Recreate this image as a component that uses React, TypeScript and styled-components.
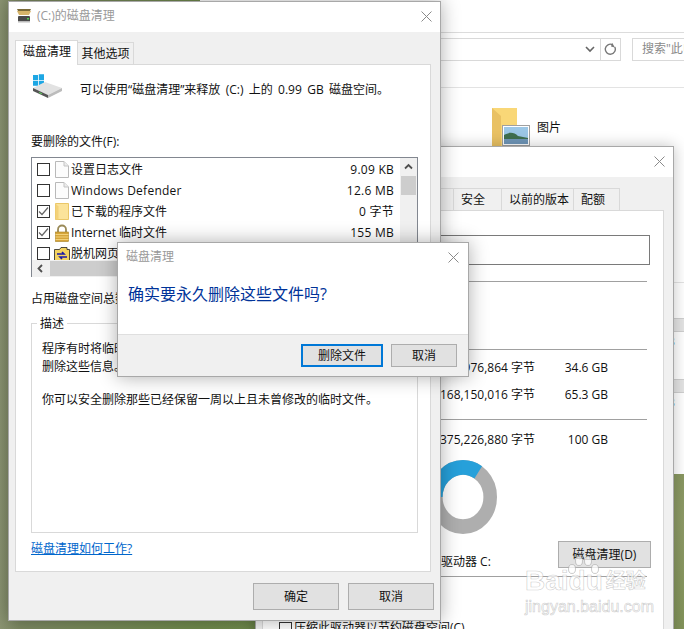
import React from "react";
import styled, { createGlobalStyle, css } from "styled-components";

const Global = createGlobalStyle`
  html, body { margin: 0; padding: 0; background: #7d8f5c; }
  * { box-sizing: border-box; }
`;

const Desktop = styled.div`
  position: relative;
  width: 684px;
  height: 629px;
  overflow: hidden;
  font-family: "Open Sans", "Noto Sans CJK SC", sans-serif;
  font-size: 12px;
  line-height: 18px;
  color: #111;
  background:
    radial-gradient(120px 200px at 100% 520px, #8d9a66, transparent),
    linear-gradient(90deg, #8b9472 0, #7d8a62 20px, #6f8a4c 200px, #7a8f50 100%);
`;

const Explorer = styled.div`
  position: absolute;
  left: 200px;
  top: 0;
  width: 484px;
  height: 474px;
  background: #fff;
  display: flex;
  flex-direction: column;
`;
const ExplorerTop = styled.div`
  height: 33px;
  flex: none;
  border-bottom: 1px solid #dcdcdc;
`;
const ExplorerBar = styled.div`
  height: 55px;
  flex: none;
  display: flex;
  gap: 11px;
  padding: 5px 0 0 0;
  border-bottom: 1px solid #e3e3e3;
`;
const AddressBox = styled.div`
  width: 421px;
  height: 23px;
  display: flex;
  justify-content: flex-end;
  border: 1px solid #d9d9d9;
`;
const AddressBtn = styled.div<{ $w: number }>`
  width: ${(p) => p.$w}px;
  display: flex;
  align-items: center;
  justify-content: center;
  color: #666;
  & + & { border-left: 1px solid #d9d9d9; }
`;
const SearchBox = styled.div`
  flex: 1;
  height: 23px;
  border: 1px solid #d9d9d9;
  border-right: 0;
  padding-left: 9px;
  line-height: 20px;
  color: #8a8a8a;
  white-space: nowrap;
  overflow: hidden;
`;
const ExplorerBody = styled.div`
  flex: 1;
  display: flex;
  flex-direction: column;
`;
const FolderItem = styled.div`
  margin: 20px 0 0 292px;
  height: 40px;
  display: flex;
  gap: 7px;
`;
const FolderLabel = styled.span`
  margin-top: 11px;
  color: #111;
`;
const SideStrip = styled.div`
  margin: 134px 0 0 474px;
  width: 10px;
  display: flex;
  flex-direction: column;
  border-top: 1px solid #e3e3e3;
  padding-top: 35px;
`;
const SideHead = styled.div`
  height: 14px;
  background: #e4e4e4;
  border-top: 1px solid #cfcfcf;
  border-bottom: 1px solid #cfcfcf;
`;
const SideValue = styled.div`
  height: 47px;
  padding-top: 1px;
  color: #345;
  margin-left: -6px;
  overflow: hidden;
`;

const Win = styled.div<{ $x: number; $y: number; $w: number; $h: number; $strong?: boolean }>`
  position: absolute;
  isolation: isolate;
  left: ${(p) => p.$x}px;
  top: ${(p) => p.$y}px;
  width: ${(p) => p.$w}px;
  height: ${(p) => p.$h}px;
  background: #f0f0f0;
  border: 1px solid #a8a8a8;
  display: flex;
  flex-direction: column;
  box-shadow: 0 0 ${(p) => (p.$strong ? 18 : 14)}px rgba(0, 0, 0, ${(p) => (p.$strong ? 0.32 : 0.24)});
`;
const TitleBar = styled.div<{ $pad: number; $right?: number }>`
  height: 30px;
  flex: none;
  background: #fff;
  display: flex;
  align-items: center;
  gap: 5px;
  padding: 0 ${(p) => p.$right ?? 8}px 2px ${(p) => p.$pad}px;
  color: #999;
`;
const TitleText = styled.span`
  flex: 1;
`;
const TabRow = styled.div<{ $top: number }>`
  display: flex;
  align-items: flex-end;
  height: 25px;
  flex: none;
  margin: ${(p) => p.$top}px 0 -1px 6px;
  position: relative;
  z-index: 1;
`;
const Tab = styled.div<{ $w: number; $active?: boolean; $nudge?: number }>`
  width: ${(p) => p.$w}px;
  text-align: center;
  padding-left: ${(p) => p.$nudge ?? 0}px;
  border: 1px solid #d9d9d9;
  border-left-width: ${(p) => (p.$active ? 1 : 0)}px;
  ${(p) =>
    p.$active
      ? css`
          height: 25px;
          background: #fff;
          border-bottom: 0;
          line-height: 22px;
        `
      : css`
          height: 23px;
          background: #f0f0f0;
          line-height: 22px;
        `}
`;
const PropTab = styled(Tab)`
  text-align: left;
  padding-left: 7px;
`;
const Panel = styled.div<{ $h: number }>`
  height: ${(p) => p.$h}px;
  flex: none;
  margin: 0 9px 0 6px;
  background: #fff;
  border: 1px solid #d9d9d9;
  display: flex;
  flex-direction: column;
  overflow: hidden;
`;
const CleanPanel = styled(Panel)`
  padding: 9px 12px 0 15px;
`;
const HeaderRow = styled.div`
  height: 24px;
  flex: none;
  display: flex;
  align-items: center;
  gap: 17px;
  padding-left: 2px;
  white-space: nowrap;
`;
const HeaderText = styled.span`
  margin-top: 8px;
  word-spacing: 2.2px;
`;
const TextLine = styled.div<{ $top: number }>`
  margin-top: ${(p) => p.$top}px;
  flex: none;
  white-space: nowrap;
`;
const ListBox = styled.div`
  width: 387px;
  height: 120px;
  flex: none;
  margin-top: 6px;
  border: 1px solid #828790;
  display: flex;
  flex-direction: column;
`;
const ListMain = styled.div`
  height: 102px;
  flex: none;
  display: flex;
`;
const Rows = styled.div`
  flex: 1;
  padding-top: 1px;
  overflow: hidden;
`;
const Row = styled.div`
  height: 21px;
  display: flex;
  align-items: center;
  padding: 0 6px 0 5px;
`;
const CheckBox = styled.span`
  width: 13px;
  height: 13px;
  flex: none;
  border: 1px solid #333;
  background: #fff;
  display: flex;
  align-items: center;
  justify-content: center;
`;
const RowIcon = styled.span`
  width: 16px;
  height: 18px;
  flex: none;
  margin: 0 1px 0 4px;
  display: flex;
  align-items: center;
  justify-content: center;
`;
const RowName = styled.span<{ $latin?: boolean }>`
  flex: 1;
  white-space: nowrap;
  color: #111;
  letter-spacing: ${(p) => (p.$latin ? "0.25px" : "0")};
`;
const RowSize = styled.span`
  white-space: nowrap;
  letter-spacing: 0.25px;
`;
const VScroll = styled.div`
  width: 17px;
  flex: none;
  background: #f0f0f0;
  display: flex;
  flex-direction: column;
`;
const ScrollArrow = styled.div`
  width: 17px;
  height: 17px;
  flex: none;
  display: flex;
  align-items: center;
  justify-content: center;
  color: #505050;
`;
const VThumb = styled.div`
  width: 15px;
  height: 19px;
  margin: 1px;
  background: #cdcdcd;
`;
const HScroll = styled.div`
  height: 17px;
  flex: none;
  background: #f0f0f0;
  display: flex;
`;
const HThumb = styled.div`
  width: 150px;
  height: 15px;
  margin: 1px;
  background: #cdcdcd;
`;
const Group = styled.fieldset`
  width: 387px;
  height: 219px;
  flex: none;
  margin: 6px 0 0;
  padding: 7px 10px 0;
  border: 1px solid #d9d9d9;
`;
const GroupTitle = styled.legend`
  margin-left: -5px;
  padding: 1px 3px 0;
  line-height: 18px;
`;
const Para = styled.p`
  margin: 0 0 15px;
  white-space: pre;
`;
const HelpLink = styled.a`
  margin-top: 7px;
  flex: none;
  align-self: flex-start;
  color: #0066cc;
  text-decoration: underline;
`;
const Footer = styled.div<{ $pad: string; $gap: number; $ruled?: boolean }>`
  flex: 1;
  display: flex;
  justify-content: flex-end;
  gap: ${(p) => p.$gap}px;
  padding: ${(p) => p.$pad};
  border-top: ${(p) => (p.$ruled ? "1px solid #dfdfdf" : "0")};
`;
const Btn = styled.div<{ $w: number; $h?: number; $primary?: boolean }>`
  width: ${(p) => p.$w}px;
  height: ${(p) => p.$h ?? 27}px;
  flex: none;
  display: flex;
  align-items: center;
  justify-content: center;
  background: #e1e1e1;
  border: ${(p) => (p.$primary ? "2px solid #0078d7" : "1px solid #adadad")};
  color: #111;
`;
const Message = styled.div`
  height: 61px;
  flex: none;
  background: #fff;
  padding: 9px 0 0 10px;
  font-size: 16px;
  line-height: 24px;
  color: #003399;
  white-space: nowrap;
`;
const Rule = styled.div<{ $top: number }>`
  height: 1px;
  flex: none;
  margin: ${(p) => p.$top}px 16px 0 14px;
  background: #a0a0a0;
`;
const DriveName = styled.div`
  height: 30px;
  flex: none;
  margin: 24px 13px 0 60px;
  border: 1px solid #7a7a7a;
`;
const TypeBlock = styled.div`
  height: 51px;
  flex: none;
`;
const SpaceRow = styled.div<{ $top: number }>`
  display: grid;
  grid-template-columns: 258px 73px;
  height: 18px;
  flex: none;
  margin: ${(p) => p.$top}px 0 0 14px;
  white-space: nowrap;
`;
const RightCell = styled.span`
  text-align: right;
`;
const Donut = styled.svg`
  display: block;
  flex: none;
  margin: 11px 0 0 166px;
`;
const CleanRow = styled.div`
  margin-top: 7px;
  height: 27px;
  flex: none;
  display: flex;
  justify-content: space-between;
  padding: 0 12px 0 178px;
`;
const DriveCaption = styled.span`
  margin-top: 12px;
  white-space: nowrap;
`;
const CompressRow = styled.div`
  margin: 42px 0 0 16px;
  display: flex;
  align-items: center;
  gap: 2px;
  white-space: nowrap;
`;
const Watermark = styled.div`
  position: absolute;
  left: 525px;
  top: 556px;
  width: 124px;
  display: flex;
  flex-direction: column;
  pointer-events: none;
  color: rgba(255, 255, 255, 0.72);
  -webkit-text-stroke: 0.6px rgba(160, 160, 160, 0.55);
  font-family: "Liberation Sans", "Noto Sans CJK SC", sans-serif;
`;
const Paw = styled.svg`
  position: absolute;
  left: 41px;
  top: 0;
`;
const WaterTop = styled.div`
  margin-top: 11px;
  font-size: 28px;
  font-weight: 700;
  line-height: 28px;
  white-space: nowrap;
`;
const WaterCn = styled.span`
  font-size: 20px;
  margin-left: 3px;
  vertical-align: 2px;
`;
const WaterUrl = styled.div`
  font-size: 16px;
  line-height: 18px;
  margin-top: 3px;
  white-space: nowrap;
`;

const CloseX = () => (
  <svg width="11" height="11" viewBox="0 0 11 11">
    <path d="M.5.5l10 10M10.5.5l-10 10" stroke="#8a8a8a" strokeWidth="1" fill="none" />
  </svg>
);
const Check = () => (
  <svg width="11" height="11" viewBox="0 0 11 11">
    <path d="M1 5.5l3 3 6-7" stroke="#666" strokeWidth="1.2" fill="none" />
  </svg>
);
const FileIcon = () => (
  <svg width="14" height="17" viewBox="0 0 14 17">
    <path d="M.5.5h8.5l4.5 4.5v11.5h-13z" fill="#fcfcfc" stroke="#b9b9b9" />
    <path d="M9 .5v4.5h4.5" fill="#ececec" stroke="#c4c4c4" />
  </svg>
);
const FolderIcon = () => (
  <svg width="14" height="17" viewBox="0 0 14 17">
    <path d="M.5.5h13v16h-13z" fill="#fbe39a" stroke="#eac768" />
    <path d="M.5.5l3 3v13h-3z" fill="#f3d27a" />
  </svg>
);
const LockIcon = () => (
  <svg width="16" height="18" viewBox="0 0 16 18">
    <path d="M4 9V5.5a4 4 0 0 1 8 0V9" fill="none" stroke="#9a8a58" strokeWidth="1.8" />
    <rect x="1.5" y="8" width="13" height="9.5" fill="#d6a53a" stroke="#a57f22" strokeWidth=".6" />
    <path d="M1.5 10.5h13M1.5 13h13M1.5 15.5h13" stroke="#f2d27c" strokeWidth="1" />
  </svg>
);
const OfflineIcon = () => (
  <svg width="16" height="16" viewBox="0 0 16 16">
    <path d="M.5 3.5h5l1.5-2h6v2h2.5v12h-15z" fill="#f4d35e" stroke="#222" strokeWidth=".8" />
    <path d="M3 8h7l-2-2M13 11H6l2 2" fill="none" stroke="#1a1aa8" strokeWidth="1.6" />
  </svg>
);
const SmallChevron = ({ dir }: { dir: "up" | "left" }) => (
  <svg width="9" height="9" viewBox="0 0 9 9">
    <path
      d={dir === "up" ? "M1 6.5l3.5-3.5 3.5 3.5" : "M6 1L2.5 4.5 6 8"}
      stroke="#505050"
      strokeWidth="1.8"
      fill="none"
    />
  </svg>
);
const TitleDrive = () => (
  <svg width="16" height="14" viewBox="0 0 16 14">
    <path d="M1 0h14l-1 2H2z" fill="#7a6a38" />
    <path d="M1 2h14l-2 4H3z" fill="#d6b46a" />
    <rect x="2" y="7" width="12" height="6" rx="1" fill="#4a4a4a" />
    <rect x="2" y="12" width="12" height="1.5" fill="#bbb" />
    <rect x="11" y="9" width="2" height="1.5" fill="#4fd14f" />
  </svg>
);
const BigDrive = () => (
  <svg width="30" height="24" viewBox="0 0 30 24">
    <path d="M0 1h5v5H0zM5.8 .2H11V6H5.8zM0 6.8h5v5H0zM5.8 6.8H11V12H5.8z" fill="#1ea7e4" />
    <path d="M0 14l12-6 17 6-14 7z" fill="#e2e2e2" />
    <path d="M0 14l15 7v3L0 17z" fill="#555" />
    <path d="M15 21l14-7v3l-14 7z" fill="#bcbcbc" />
    <path d="M6 18l3 1.3v1l-3-1.3z" fill="#5fd35f" />
  </svg>
);
const BigFolder = () => (
  <svg width="38" height="38" viewBox="0 0 38 38" style={{ flex: "none" }}>
    <path d="M0 0h25v38H0z" fill="#f9d777" />
    <path d="M0 0l9 8v30H0z" fill="#e9c163" />
    <rect x="10.5" y="17.5" width="27" height="20" fill="#fff" stroke="#a0a0a0" />
    <rect x="12" y="19" width="24" height="17" fill="#9cc7e6" />
    <path d="M12 27c5-3 10-3 14 1l10 2v1H12z" fill="#3f6f4f" />
    <rect x="12" y="31" width="24" height="5" fill="#6f96b8" />
  </svg>
);

const files = [
  { name: "设置日志文件", size: "9.09 KB", on: false, icon: <FileIcon /> },
  { name: "Windows Defender", size: "12.6 MB", on: false, icon: <FileIcon />, latin: true },
  { name: "已下载的程序文件", size: "0 字节", on: true, icon: <FolderIcon /> },
  { name: "Internet 临时文件", size: "155 MB", on: true, icon: <LockIcon /> },
  { name: "脱机网页", size: "0 字节", on: false, icon: <OfflineIcon /> },
];
const tabs = [
  { t: "安全", w: 48 },
  { t: "以前的版本", w: 72 },
  { t: "配额", w: 46 },
];

export default function App() {
  return (
    <Desktop>
      <Global />
      <Explorer>
        <ExplorerTop />
        <ExplorerBar>
          <AddressBox>
            <AddressBtn $w={20}>
              <svg width="10" height="7" viewBox="0 0 10 7">
                <path d="M1 1l4 4 4-4" stroke="#666" strokeWidth="1.6" fill="none" />
              </svg>
            </AddressBtn>
            <AddressBtn $w={20}>
              <svg width="13" height="13" viewBox="0 0 13 13">
                <path d="M10.8 4a5 5 0 1 1-2.3-2.3" stroke="#777" strokeWidth="1.4" fill="none" />
                <path d="M7.5 0v4h4z" fill="#777" transform="rotate(15 9 2)" />
              </svg>
            </AddressBtn>
          </AddressBox>
          <SearchBox>搜索"此电脑"</SearchBox>
        </ExplorerBar>
        <ExplorerBody>
          <FolderItem>
            <BigFolder />
            <FolderLabel>图片</FolderLabel>
          </FolderItem>
          <SideStrip>
            <SideHead />
            <SideValue>3</SideValue>
            <SideHead />
            <SideValue>3</SideValue>
          </SideStrip>
        </ExplorerBody>
      </Explorer>

      <Win $x={255} $y={146} $w={419} $h={500}>
        <TitleBar $pad={12}>
          <TitleText />
          <CloseX />
        </TitleBar>
        <TabRow $top={9}>
          <Tab $w={192} />
          {tabs.map((t) => (
            <PropTab key={t.t} $w={t.w}>
              {t.t}
            </PropTab>
          ))}
        </TabRow>
        <Panel $h={440}>
          <DriveName />
          <Rule $top={16} />
          <TypeBlock />
          <Rule $top={16} />
          <SpaceRow $top={9}>
            <RightCell>976,864 字节</RightCell>
            <RightCell>34.6 GB</RightCell>
          </SpaceRow>
          <SpaceRow $top={9}>
            <RightCell>168,150,016 字节</RightCell>
            <RightCell>65.3 GB</RightCell>
          </SpaceRow>
          <Rule $top={15} />
          <SpaceRow $top={11}>
            <RightCell>375,226,880 字节</RightCell>
            <RightCell>100 GB</RightCell>
          </SpaceRow>
          <Donut width="68" height="74" viewBox="0 0 74 74" preserveAspectRatio="none">
            <circle cx="37" cy="37" r="29.6" fill="none" stroke="#aeaeae" strokeWidth="14.8" />
            <circle
              cx="37"
              cy="37"
              r="29.6"
              fill="none"
              stroke="#26a0da"
              strokeWidth="14.8"
              strokeDasharray="64 186"
              transform="rotate(180 37 37)"
            />
          </Donut>
          <CleanRow>
            <DriveCaption>驱动器 C:</DriveCaption>
            <Btn $w={93}>磁盘清理(D)</Btn>
          </CleanRow>
          <Rule $top={8} />
          <CompressRow>
            <CheckBox />
            <span>压缩此驱动器以节约磁盘空间(C)</span>
          </CompressRow>
        </Panel>
      </Win>

      <Win $x={8} $y={1} $w={433} $h={620} $strong>
        <TitleBar $pad={7}>
          <TitleDrive />
          <TitleText>(C:)的磁盘清理</TitleText>
          <CloseX />
        </TitleBar>
        <TabRow $top={8}>
          <Tab $w={63} $active $nudge={1}>
            磁盘清理
          </Tab>
          <Tab $w={56}>其他选项</Tab>
        </TabRow>
        <CleanPanel $h={508}>
          <HeaderRow>
            <BigDrive />
            <HeaderText>可以使用“磁盘清理”来释放 (C:) 上的 0.99 GB 磁盘空间。</HeaderText>
          </HeaderRow>
          <TextLine $top={35}>要删除的文件(F):</TextLine>
          <ListBox>
            <ListMain>
              <Rows>
                {files.map((f) => (
                  <Row key={f.name}>
                    <CheckBox>{f.on && <Check />}</CheckBox>
                    <RowIcon>{f.icon}</RowIcon>
                    <RowName $latin={f.latin}>{f.name}</RowName>
                    <RowSize>{f.size}</RowSize>
                  </Row>
                ))}
              </Rows>
              <VScroll>
                <ScrollArrow>
                  <SmallChevron dir="up" />
                </ScrollArrow>
                <VThumb />
              </VScroll>
            </ListMain>
            <HScroll>
              <ScrollArrow>
                <SmallChevron dir="left" />
              </ScrollArrow>
              <HThumb />
            </HScroll>
          </ListBox>
          <TextLine $top={13}>占用磁盘空间总数:</TextLine>
          <Group>
            <GroupTitle>描述</GroupTitle>
            <Para>{"程序有时将临时信息保存在 TEMP 文件夹中。\n删除这些信息。"}</Para>
            <Para>你可以安全删除那些已经保留一周以上且未曾修改的临时文件。</Para>
          </Group>
          <HelpLink>磁盘清理如何工作?</HelpLink>
        </CleanPanel>
        <Footer $pad="11px 6px 0 0" $gap={9}>
          <Btn $w={86}>确定</Btn>
          <Btn $w={86}>取消</Btn>
        </Footer>
      </Win>

      <Win $x={117} $y={242} $w={352} $h={135} $strong>
        <TitleBar $pad={8} $right={9}>
          <TitleText>磁盘清理</TitleText>
          <CloseX />
        </TitleBar>
        <Message>确实要永久删除这些文件吗?</Message>
        <Footer $pad="9px 11px 0 0" $gap={8} $ruled>
          <Btn $w={82} $h={23} $primary>
            删除文件
          </Btn>
          <Btn $w={66} $h={23}>
            取消
          </Btn>
        </Footer>
      </Win>

      <Watermark>
        <Paw width="36" height="26" viewBox="0 0 36 26">
          <g fill="rgba(255,255,255,.75)" stroke="rgba(160,160,160,.55)">
            <ellipse cx="6" cy="13" rx="3.5" ry="4.5" />
            <ellipse cx="13" cy="5" rx="3.5" ry="4.5" />
            <ellipse cx="22" cy="5" rx="3.5" ry="4.5" />
            <ellipse cx="29" cy="13" rx="3.5" ry="4.5" />
          </g>
        </Paw>
        <WaterTop>
          Baidu<WaterCn>经验</WaterCn>
        </WaterTop>
        <WaterUrl>jingyan.baidu.com</WaterUrl>
      </Watermark>
    </Desktop>
  );
}
